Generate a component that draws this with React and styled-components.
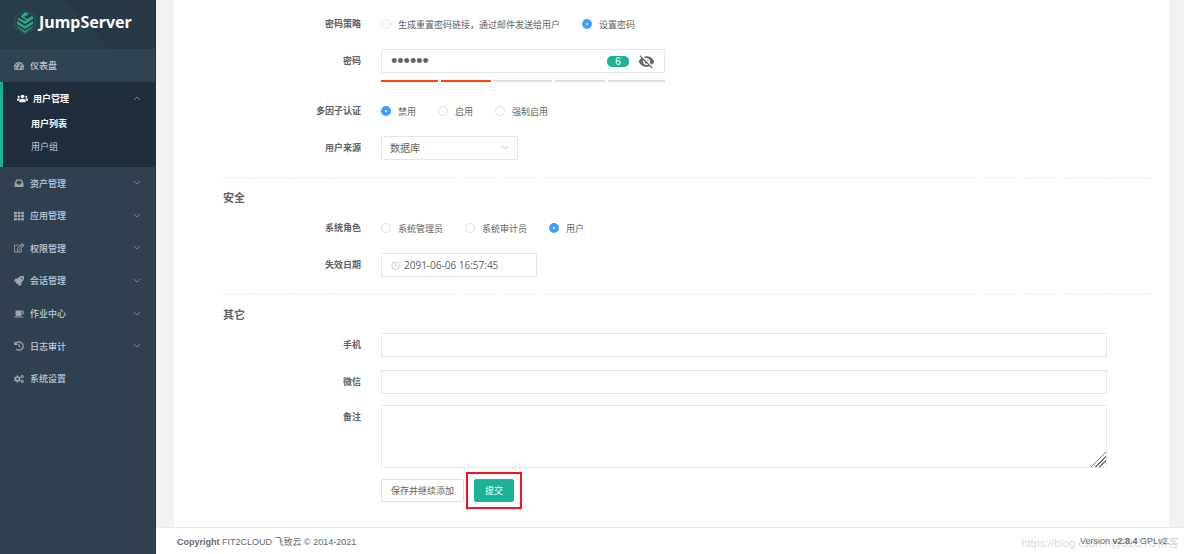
import React, { useState } from "react";
import styled, { createGlobalStyle } from "styled-components";
import {
  FaTachometerAlt,
  FaUsers,
  FaTh,
  FaRegEdit,
  FaRocket,
  FaCoffee,
  FaHistory,
  FaCogs,
} from "react-icons/fa";
import { MdVisibilityOff } from "react-icons/md";

const GlobalStyle = createGlobalStyle`
  * {
    box-sizing: border-box;
  }
  body {
    margin: 0;
    overflow: hidden;
    background: #f2f2f2;
    color: #606266;
    font-family: "Open Sans", "Noto Sans CJK SC", sans-serif;
    font-size: 9px;
  }
  button, input, select, textarea {
    font-family: inherit;
  }
`;

const Layout = styled.div`
  display: flex;
  height: 100vh;
`;

const Sidebar = styled.nav`
  flex: none;
  width: 156px;
  background: #2f4050;
  border-right: 1px solid #233242;
`;

const Logo = styled.a`
  display: flex;
  align-items: center;
  gap: 3px;
  height: 49px;
  padding: 0 14px 6px;
  background: linear-gradient(50deg, #293c4a 0 55%, #273746 55% 100%);
  color: #fff;
  font-family: "Noto Sans", sans-serif;
  font-size: 16px;
  font-weight: 700;
  text-decoration: none;
`;

const TopMenu = styled.div`
  display: grid;
  height: 33px;
  background: #304353;
`;

const Menu = styled.div`
  display: grid;
  grid-auto-rows: 1fr;
  height: 228px;
`;

const ActiveGroup = styled.div`
  height: 85px;
  padding-left: 3px;
  background: linear-gradient(to right, #1ab394 3px, #1f2d3d 3px);
`;

const MenuItem = styled.a`
  display: flex;
  align-items: center;
  min-height: 32px;
  padding: 0 14px;
  color: ${(props) => (props.$active ? "#fff" : "#bfcbd9")};
  font-weight: ${(props) => (props.$active ? 700 : 500)};
  text-decoration: none;

  span {
    flex: 1;
  }
  .icon {
    width: ${(props) => (props.$active ? 11 : 10)}px;
    height: ${(props) => (props.$active ? 11 : 10)}px;
    margin-right: ${(props) => (props.$active ? 5 : 6)}px;
    color: ${(props) => (props.$active ? "#fff" : "#a0a3a8")};
  }
  .arrow {
    color: #8a949f;
  }
`;

const SubMenu = styled.div`
  margin-top: -2px;
`;

const SubItem = styled.a`
  display: flex;
  align-items: center;
  height: 23px;
  padding-left: 28px;
  color: ${(props) => (props.$active ? "#fff" : "#bfcbd9")};
  font-weight: ${(props) => (props.$active ? 700 : 400)};
  text-decoration: none;
`;

const Main = styled.div`
  display: flex;
  flex: 1;
  flex-direction: column;
  min-width: 0;
`;

const Panel = styled.form`
  flex: 1;
  margin: 0 15px 0 18px;
  padding: 12px 17px 0 49px;
  background: #fff;
`;

const Row = styled.div`
  display: flex;
  align-items: flex-start;
  margin-bottom: ${(props) => props.$gap || 13}px;
`;

const Label = styled.label`
  flex: none;
  width: 138px;
  margin-right: 20px;
  line-height: 24px;
  text-align: right;
  font-weight: 700;
`;

const Content = styled.div`
  flex: 1;
  min-width: 0;
  margin-right: 45px;
`;

const RadioGroup = styled.div`
  display: flex;
  align-items: center;
  gap: 22px;
  height: 24px;
`;

const RadioLabel = styled.label`
  display: flex;
  align-items: center;
  gap: 7px;

  input {
    appearance: none;
    width: 10px;
    height: 10px;
    margin: 0;
    border: 1px solid #dcdfe6;
    border-radius: 50%;
    background: #fff;
  }
  input:checked {
    border: 4px solid #409eff;
  }
`;

const Input = styled.input`
  display: block;
  width: 100%;
  height: 24px;
  padding: 0 9px;
  border: 1px solid #e5e6e7;
  border-radius: 1px;
  background: #fff;
  color: #606266;
  font-size: 10px;
`;

const PasswordField = styled.div`
  width: 284px;
`;

const Box = styled.div`
  display: flex;
  align-items: center;
  gap: ${(props) => props.$gap || 0}px;
  width: ${(props) => props.$width}px;
  height: 24px;
  padding: 0 9px;
  border: 1px solid #e5e6e7;
  border-radius: 1px;

  input {
    flex: 1;
    min-width: 0;
    padding: 0;
    border: 0;
    outline: 0;
    color: #606266;
    font-size: 10px;
  }
  input[type="password"] {
    font-family: "Liberation Sans", sans-serif;
    font-size: 18px;
  }
`;

const Badge = styled.span`
  width: 22px;
  height: 11px;
  border-radius: 5px;
  background: #1ab394;
  color: #fff;
  font-family: "Liberation Sans", sans-serif;
  font-size: 10px;
  line-height: 11px;
  text-align: center;
`;

const EyeButton = styled.button`
  display: flex;
  margin-left: 9px;
  padding: 0;
  border: 0;
  background: none;
  color: #666;
`;

const Strength = styled.div`
  display: grid;
  grid-template-columns: 57fr 50fr 57fr 50fr 57fr;
  gap: 3px;
  margin-top: 7px;
`;

const StrengthBar = styled.i`
  height: 2px;
  background: ${(props) => (props.$on ? "#ff4500" : "#ddd")};
`;

const SelectBox = styled.div`
  display: grid;
  grid-template-columns: 1fr 8px;
  align-items: center;
  width: 137px;
  height: 24px;
  padding-right: 8px;
  border: 1px solid #e5e6e7;
  border-radius: 1px;

  select {
    grid-area: 1 / 1 / 2 / 3;
    width: 100%;
    height: 22px;
    padding: 0 8px;
    appearance: none;
    border: 0;
    background: none;
    color: #606266;
    font-size: 10px;
  }
  svg {
    grid-area: 1 / 2;
    color: #b4b8c0;
    pointer-events: none;
  }
`;

const Divider = styled.hr`
  height: 0;
  margin: 0;
  border: 0;
  border-top: 1px dashed #e9ebed;
`;

const Heading = styled.h3`
  margin: 12px 0 10px;
  font-size: 11px;
  line-height: 16px;
`;

const TextArea = styled.textarea`
  display: block;
  width: 100%;
  height: 63px;
  border: 1px solid #e5e6e7;
  border-radius: 1px;
  resize: vertical;

  &::-webkit-resizer {
    background: linear-gradient(
      135deg,
      transparent 0 48%,
      #777 48% 53%,
      transparent 53% 62%,
      #777 62% 67%,
      transparent 67% 76%,
      #777 76% 81%,
      transparent 81%
    );
  }
`;

const Actions = styled.div`
  display: flex;
  align-items: center;
  gap: 2px;
  margin: -9px 0 0 158px;
`;

const Button = styled.button`
  height: 23px;
  padding: 0 ${(props) => (props.$primary ? 10 : 9)}px;
  border: 1px solid ${(props) => (props.$primary ? "#1ab394" : "#dcdfe6")};
  border-radius: 2px;
  background: ${(props) => (props.$primary ? "#1ab394" : "#fff")};
  color: ${(props) => (props.$primary ? "#fff" : "#606266")};
  font-size: 9px;
  white-space: nowrap;
`;

const Highlight = styled.div`
  padding: 5px 6px;
  border: 2px solid #f5141b;
`;

const Footer = styled.footer`
  position: relative;
  display: flex;
  align-items: center;
  justify-content: space-between;
  height: 27px;
  padding: 0 14px 0 21px;
  border-top: 1px solid #e7eaec;
  background: #fff;
  color: #676a6c;
  font-family: "Liberation Sans", "Noto Sans CJK SC", sans-serif;
  font-size: 9px;
`;

const Watermark = styled.span`
  position: absolute;
  right: 5px;
  bottom: 4px;
  color: rgba(150, 150, 150, 0.4);
  font-size: 11px;
  line-height: 14px;
`;

const Inbox = ({ className }) => (
  <svg className={className} viewBox="0 0 10 10" fill="currentColor">
    <path
      fillRule="evenodd"
      d="M2.3 1.5h5.4L9.5 5.6V9h-9V5.6zM3.2 2.8L2 5.6h1.6l.6 1.2h1.6l.6-1.2H8L6.8 2.8z"
    />
  </svg>
);

const menus = [
  { text: "资产管理", icon: Inbox, arrow: true },
  { text: "应用管理", icon: FaTh, arrow: true },
  { text: "权限管理", icon: FaRegEdit, arrow: true },
  { text: "会话管理", icon: FaRocket, arrow: true },
  { text: "作业中心", icon: FaCoffee, arrow: true },
  { text: "日志审计", icon: FaHistory, arrow: true },
  { text: "系统设置", icon: FaCogs },
];

const Arrow = ({ up }) => (
  <svg
    className="arrow"
    width="8"
    height="8"
    viewBox="0 0 8 8"
    fill="none"
    stroke="currentColor"
  >
    <path d={up ? "M1 6l3-3 3 3" : "M1 2l3 3 3-3"} strokeWidth="0.8" />
  </svg>
);

const LogoMark = () => (
  <svg width="22" height="26" viewBox="0 0 22 26" fill="none">
    <path d="M11 1l10 6v12l-10 6-10-6V7z" stroke="#226557" strokeWidth="0.8" />
    <path
      d="M11 3l4 2-5 3 3 2 5-3 1 1v2l-8 5-8-5 2-1 6 3 1-1-5-3V7zM3 12l8 5 8-5v3l-8 5-8-5zM3 17l8 5 8-5v1l-8 6-8-6z"
      fill="#2aa587"
    />
  </svg>
);

const Clock = () => (
  <svg width="9" height="9" viewBox="0 0 9 9" fill="none" stroke="#c0c4cc">
    <circle cx="4.5" cy="4.5" r="3.8" strokeWidth="0.8" />
    <path d="M4.5 2v2.8h2" strokeWidth="0.8" />
  </svg>
);

const Radios = ({ name, label, options, initial }) => {
  const [value, setValue] = useState(initial);

  return (
    <RadioGroup role="radiogroup" aria-label={label}>
      {options.map((option) => (
        <RadioLabel key={option}>
          <input
            type="radio"
            name={name}
            checked={value === option}
            onChange={() => setValue(option)}
          />
          {option}
        </RadioLabel>
      ))}
    </RadioGroup>
  );
};

const SideMenu = () => (
  <Sidebar>
    <Logo href="#">
      <LogoMark />
      JumpServer
    </Logo>
    <TopMenu>
      <MenuItem href="#">
        <FaTachometerAlt className="icon" />
        <span>仪表盘</span>
      </MenuItem>
    </TopMenu>
    <ActiveGroup>
      <MenuItem href="#" $active>
        <FaUsers className="icon" />
        <span>用户管理</span>
        <Arrow up />
      </MenuItem>
      <SubMenu>
        <SubItem href="#" $active>
          用户列表
        </SubItem>
        <SubItem href="#">用户组</SubItem>
      </SubMenu>
    </ActiveGroup>
    <Menu>
      {menus.map(({ text, icon: Icon, arrow }) => (
        <MenuItem href="#" key={text}>
          <Icon className="icon" />
          <span>{text}</span>
          {arrow && <Arrow />}
        </MenuItem>
      ))}
    </Menu>
  </Sidebar>
);

const App = () => {
  const [password, setPassword] = useState("123456");
  const [visible, setVisible] = useState(false);

  return (
    <Layout>
      <GlobalStyle />
      <SideMenu />
      <Main>
        <Panel onSubmit={(e) => e.preventDefault()}>
          <Row>
            <Label as="span">密码策略</Label>
            <Radios
              name="strategy"
              label="密码策略"
              options={["生成重置密码链接，通过邮件发送给用户", "设置密码"]}
              initial="设置密码"
            />
          </Row>
          <Row $gap={17}>
            <Label htmlFor="password">密码</Label>
            <PasswordField>
              <Box $width={284}>
                <input
                  id="password"
                  type={visible ? "text" : "password"}
                  value={password}
                  onChange={(e) => setPassword(e.target.value)}
                />
                <Badge>{password.length}</Badge>
                <EyeButton
                  type="button"
                  aria-label="显示密码"
                  onClick={() => setVisible(!visible)}
                >
                  <MdVisibilityOff size={17} />
                </EyeButton>
              </Box>
              <Strength>
                {[1, 2, 3, 4, 5].map((level) => (
                  <StrengthBar key={level} $on={level < 3} />
                ))}
              </Strength>
            </PasswordField>
          </Row>
          <Row>
            <Label as="span">多因子认证</Label>
            <Radios
              name="mfa"
              label="多因子认证"
              options={["禁用", "启用", "强制启用"]}
              initial="禁用"
            />
          </Row>
          <Row $gap={17}>
            <Label htmlFor="source">用户来源</Label>
            <SelectBox>
              <select id="source">
                <option>数据库</option>
              </select>
              <Arrow />
            </SelectBox>
          </Row>
          <Divider />
          <Heading>安全</Heading>
          <Row>
            <Label as="span">系统角色</Label>
            <Radios
              name="role"
              label="系统角色"
              options={["系统管理员", "系统审计员", "用户"]}
              initial="用户"
            />
          </Row>
          <Row $gap={17}>
            <Label htmlFor="expired">失效日期</Label>
            <Box $width={156} $gap={4}>
              <Clock />
              <input id="expired" defaultValue="2091-06-06 16:57:45" />
            </Box>
          </Row>
          <Divider />
          <Heading>其它</Heading>
          <Row>
            <Label htmlFor="phone">手机</Label>
            <Content>
              <Input id="phone" />
            </Content>
          </Row>
          <Row $gap={11}>
            <Label htmlFor="wechat">微信</Label>
            <Content>
              <Input id="wechat" />
            </Content>
          </Row>
          <Row $gap={13}>
            <Label htmlFor="comment">备注</Label>
            <Content>
              <TextArea id="comment" />
            </Content>
          </Row>
          <Actions>
            <Button type="button">保存并继续添加</Button>
            <Highlight>
              <Button type="submit" $primary>
                提交
              </Button>
            </Highlight>
          </Actions>
        </Panel>
        <Footer>
          <span>
            <b>Copyright</b> FIT2CLOUD 飞致云 © 2014-2021
          </span>
          <span>
            Version <b>v2.8.4</b> GPLv2.
          </span>
          <Watermark>https://blog.csdn.n@51CTO博客</Watermark>
        </Footer>
      </Main>
    </Layout>
  );
};

export default App;
